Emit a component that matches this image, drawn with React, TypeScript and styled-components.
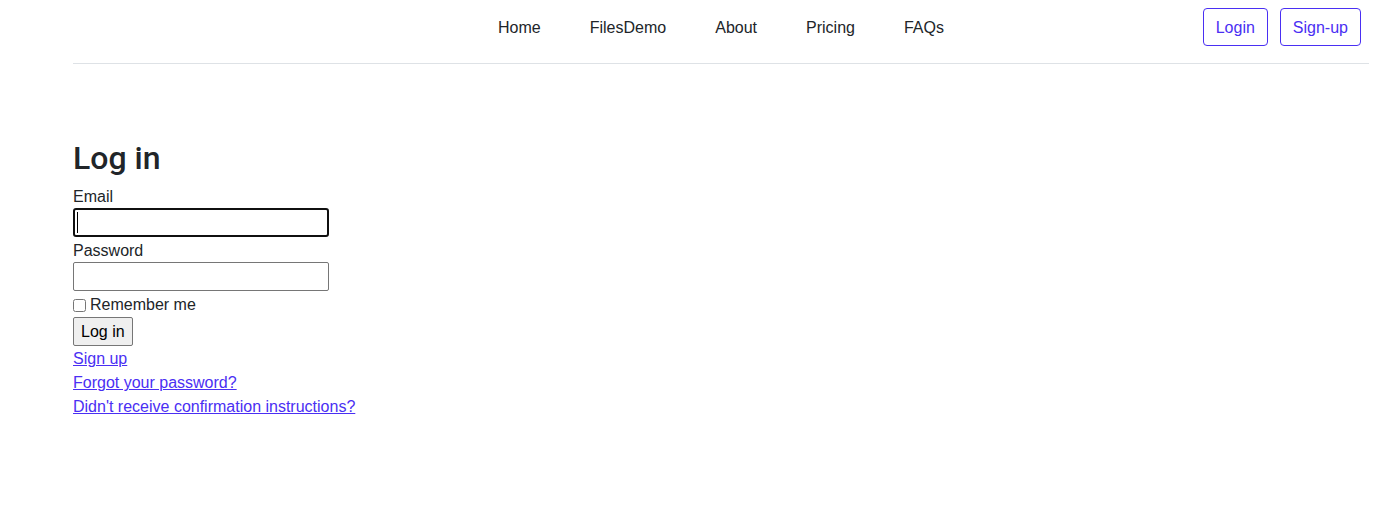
import React from "react";
import styled, { createGlobalStyle } from "styled-components";

const GlobalStyle = createGlobalStyle`
  html, body { margin: 0; padding: 0; background: #fff; }
  body {
    font-family: "Liberation Sans", Arial, sans-serif;
    font-size: 16px;
    line-height: 1.5;
    color: #212529;
  }
  * { box-sizing: border-box; }
`;

const Header = styled.header`
  margin: 0 30px 0 73px;
  padding: 8px 0 17px;
  border-bottom: 1px solid #dee2e6;
  display: grid;
  grid-template-columns: 1fr auto 1fr;
  align-items: center;
`;

const Nav = styled.nav`
  grid-column: 2;
  display: flex;
  gap: 49px;
  align-items: center;
  margin-top: 1px;
`;

const NavLink = styled.a`
  color: #212529;
  text-decoration: none;
`;

const Actions = styled.div`
  grid-column: 3;
  justify-self: end;
  display: flex;
  gap: 12px;
  margin-right: 8px;
`;

const OutlineButton = styled.a`
  display: inline-flex;
  align-items: center;
  height: 38px;
  padding: 1px 12px 0;
  border: 1px solid #4a2ff3;
  border-radius: 4px;
  color: #4a2ff3;
  text-decoration: none;
`;

const Main = styled.main`
  margin-left: 73px;
  padding-top: 75px;
`;

const Title = styled.h2`
  margin: 0 0 8px;
  font-family: Roboto, "Liberation Sans", sans-serif;
  font-size: 32px;
  font-weight: 500;
  line-height: 1.2;
`;

const Form = styled.form`
  display: flex;
  flex-direction: column;
  align-items: flex-start;
`;

const Label = styled.label`
  display: block;
  height: 22px;
  line-height: 24px;
`;

const InputRow = styled.div`
  height: 32px;
  padding-top: 1px;
`;

const TextInput = styled.input<{ $focused?: boolean }>`
  width: 256px;
  height: 29px;
  padding: 1px 3px;
  font: inherit;
  border: ${(p) => (p.$focused ? "2px solid #101010" : "1px solid #767676")};
  border-radius: ${(p) => (p.$focused ? "3px" : "2px")};
  outline: none;
  caret-color: #000;
  background: ${(p) =>
    p.$focused
      ? "#fff linear-gradient(#000, #000) no-repeat 2px 2px / 1px 21px"
      : "#fff"};
`;

const CheckRow = styled.div`
  height: 24px;
  display: flex;
  align-items: center;
  gap: 4px;
`;

const Checkbox = styled.input`
  width: 13px;
  height: 13px;
  margin: 0;
`;

const ButtonRow = styled.div`
  height: 30px;
`;

const SubmitButton = styled.button`
  height: 29px;
  padding: 0 7px;
  font: inherit;
  color: #000;
  background: #efefef;
  border: 1px solid #767676;
  border-radius: 2px;
`;

const Links = styled.div`
  display: flex;
  flex-direction: column;
  align-items: flex-start;
`;

const TextLink = styled.a`
  color: #4a2ff3;
  text-decoration: underline;
`;

export default function App() {
  return (
    <>
      <GlobalStyle />
      <Header>
        <Nav>
          <NavLink href="#">Home</NavLink>
          <NavLink href="#">FilesDemo</NavLink>
          <NavLink href="#">About</NavLink>
          <NavLink href="#">Pricing</NavLink>
          <NavLink href="#">FAQs</NavLink>
        </Nav>
        <Actions>
          <OutlineButton href="#">Login</OutlineButton>
          <OutlineButton href="#">Sign-up</OutlineButton>
        </Actions>
      </Header>
      <Main>
        <Title>Log in</Title>
        <Form onSubmit={(e) => e.preventDefault()}>
          <Label htmlFor="email">Email</Label>
          <InputRow>
            <TextInput id="email" type="email" $focused />
          </InputRow>
          <Label htmlFor="password">Password</Label>
          <InputRow>
            <TextInput id="password" type="password" />
          </InputRow>
          <CheckRow>
            <Checkbox type="checkbox" id="remember" />
            <label htmlFor="remember">Remember me</label>
          </CheckRow>
          <ButtonRow>
            <SubmitButton type="submit">Log in</SubmitButton>
          </ButtonRow>
        </Form>
        <Links>
          <TextLink href="#">Sign up</TextLink>
          <TextLink href="#">Forgot your password?</TextLink>
          <TextLink href="#">Didn't receive confirmation instructions?</TextLink>
        </Links>
      </Main>
    </>
  );
}
